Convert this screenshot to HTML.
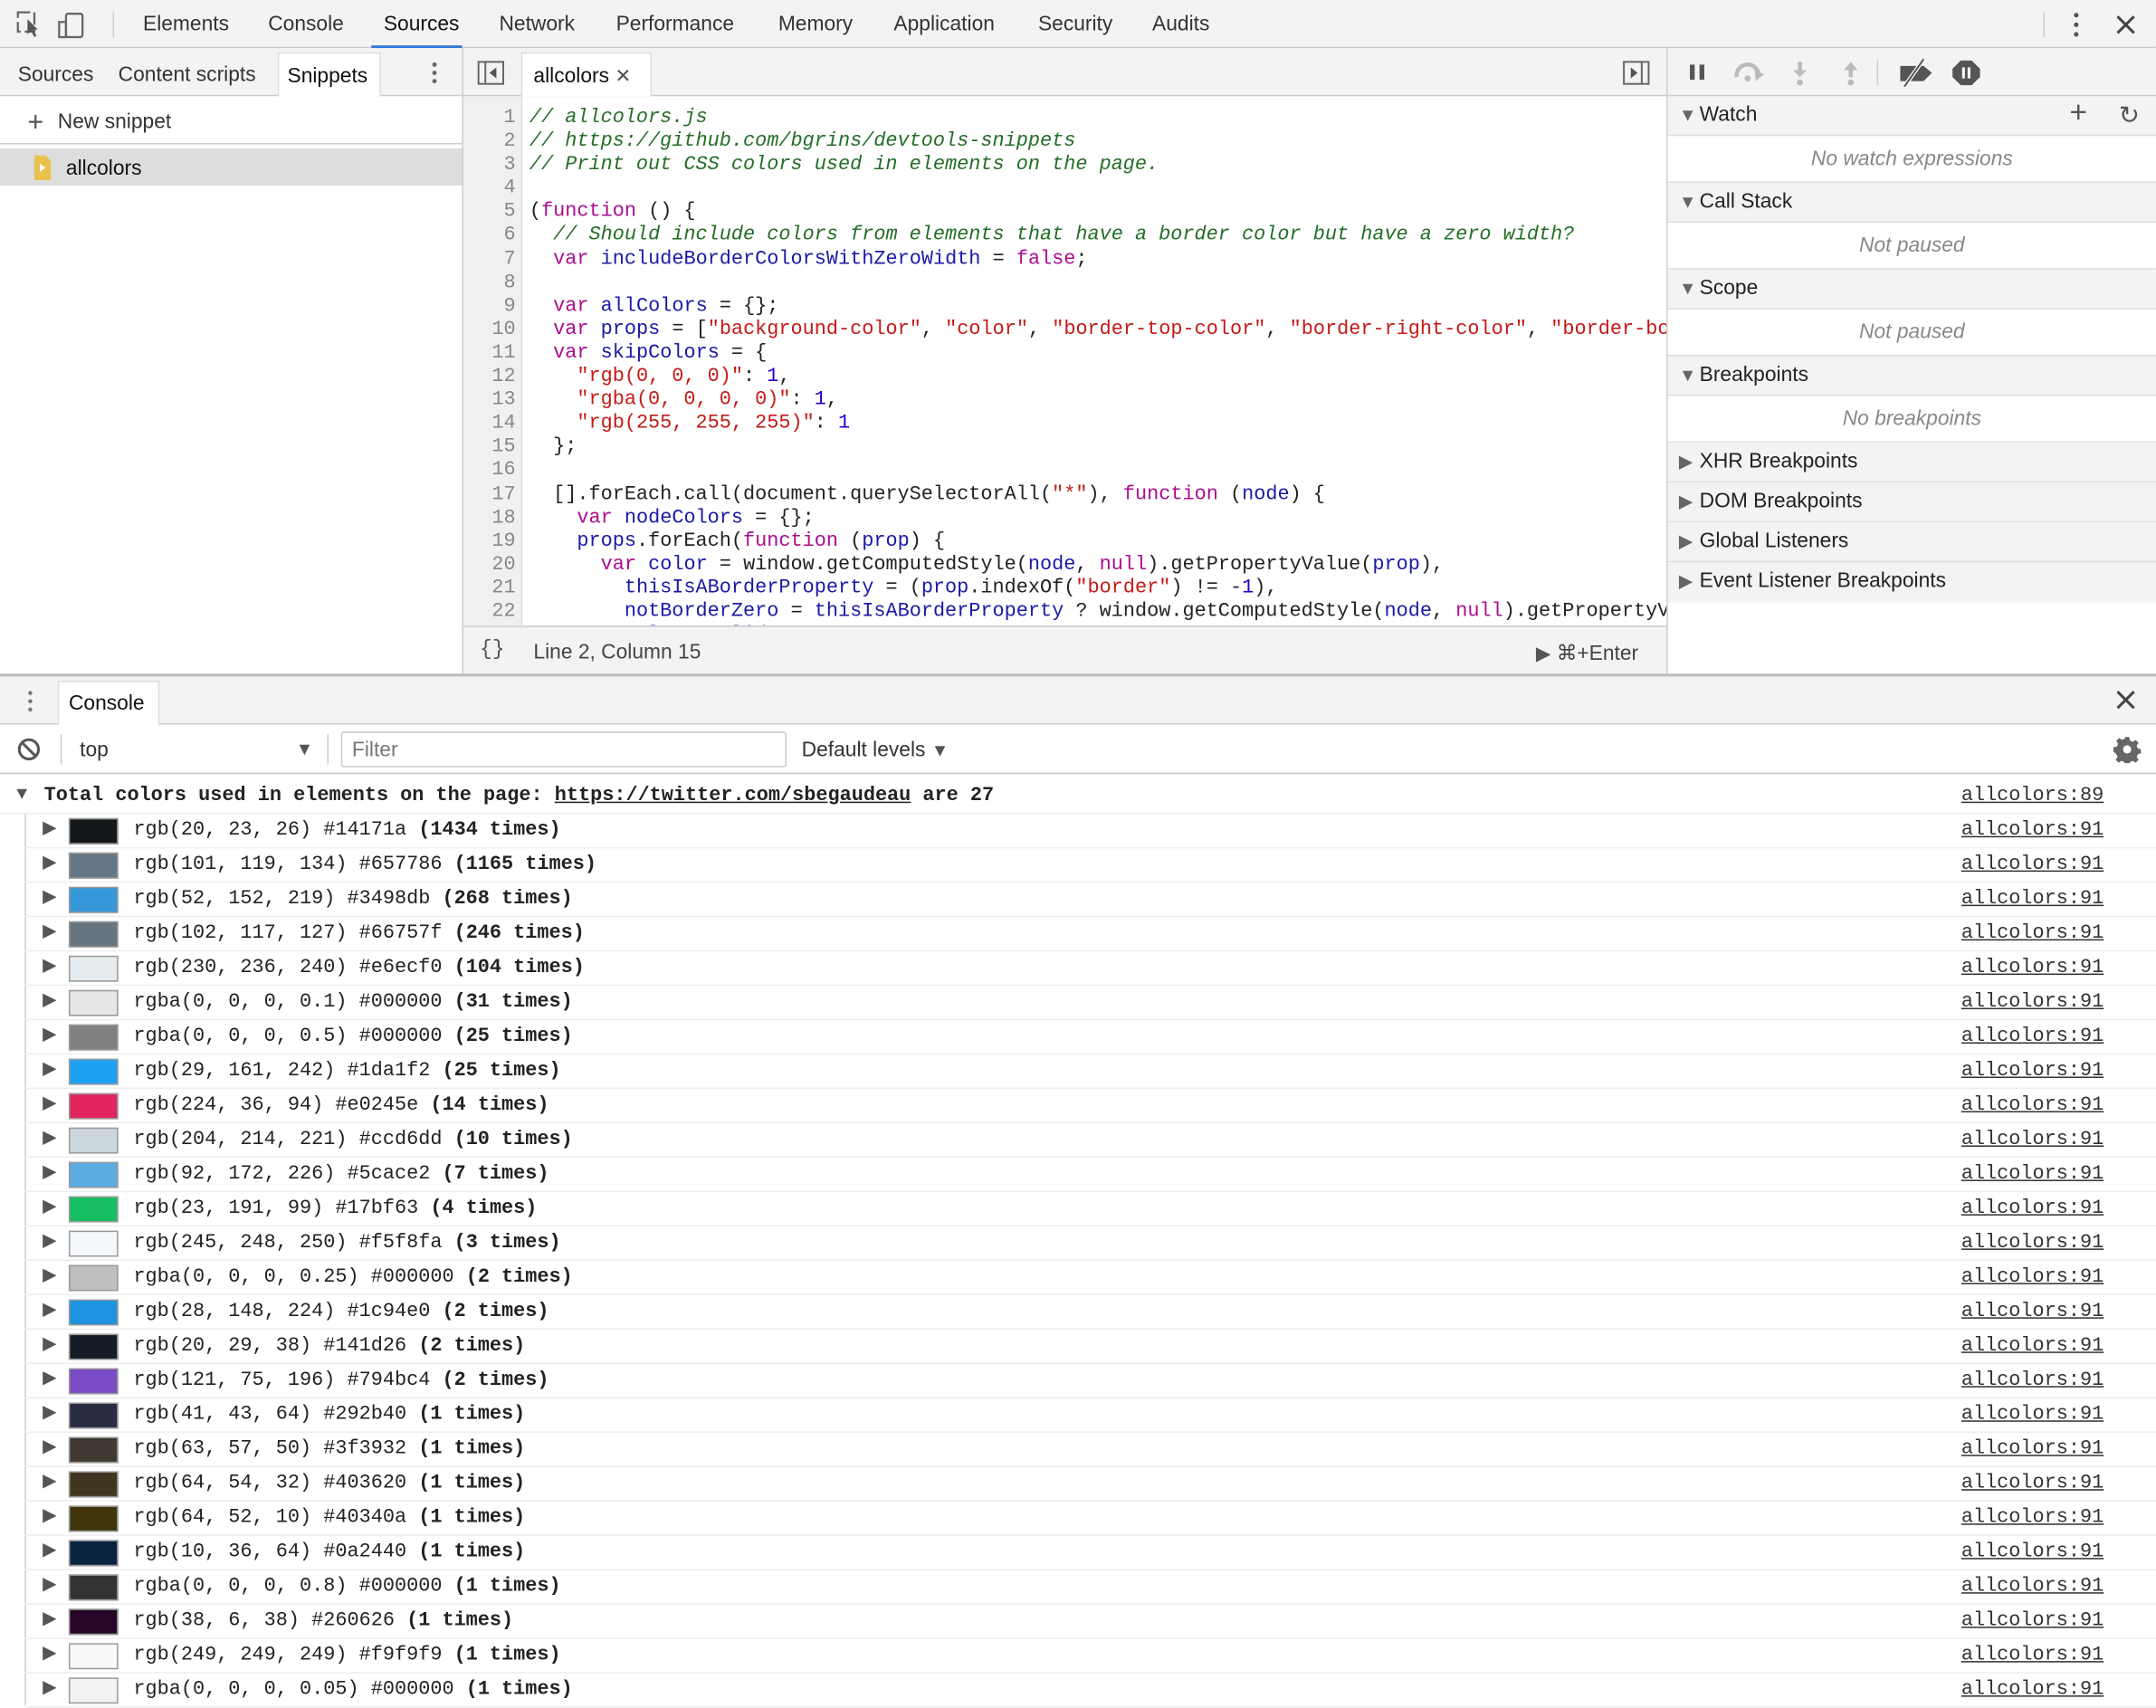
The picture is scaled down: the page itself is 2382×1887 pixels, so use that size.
<!DOCTYPE html>
<html><head><meta charset="utf-8"><style>
*{box-sizing:border-box;margin:0;padding:0}
html,body{width:2382px;height:1884px;overflow:hidden;background:#fff}
#w{position:absolute;left:0;top:0;width:1568px;height:1240px;transform:scale(1.51913);transform-origin:0 0;font-family:"Liberation Sans",sans-serif;font-size:15px;color:#333}
.a{position:absolute}
.bar{background:#f3f3f3}
.mono{font-family:"Liberation Mono",monospace;font-size:14.4px}
.cm{color:#236e25;font-style:italic}
.k{color:#aa0d91}.v{color:#1a1aa6}.s{color:#c41a16}.n{color:#1c00cf}
.code div{height:17.1px;line-height:17.1px;white-space:pre}
.ln div{height:17.1px;line-height:17.1px;text-align:right;color:#888}
.sec{position:absolute;left:1213px;width:355px;background:#f3f3f3;border-bottom:1px solid #ddd;height:29px;line-height:28px;padding-left:23px;font-size:15px;color:#222}
.sec i{position:absolute;left:8px;top:0;font-style:normal;font-size:13px;color:#666}
.emp{position:absolute;left:1213px;width:355px;text-align:center;font-style:italic;color:#888;height:34px;line-height:34px;border-bottom:1px solid #ddd;background:#fff}
.row{position:absolute;left:18px;width:1550px;height:25px;border-bottom:1px solid #eee;font-family:"Liberation Mono",monospace;font-size:14.4px;line-height:25px;color:#222}
.row .t{position:absolute;left:13px;top:-2px;font-size:13px;color:#555}
.row .sw{position:absolute;left:32px;top:3px;width:36px;height:19px;border:1px solid #999}
.row .x{position:absolute;left:79px}
.row .r{position:absolute;right:38px;text-decoration:underline;color:#333}
b{font-weight:bold}
</style></head><body><div id="w">
<div class="a bar" style="left:0;top:0;width:1568px;height:35px;border-bottom:1px solid #ccc"></div>
<svg class="a" style="left:12px;top:8px" width="54" height="20"><rect x="1" y="1" width="12" height="14" fill="none" stroke="#666" stroke-width="1.5" stroke-dasharray="9 3"/><path d="M8 6 L8 17 L10.5 14.5 L13 19 L14.5 18 L12 13.5 L15.5 13.5Z" fill="#555"/><rect x="36" y="2" width="12" height="17" rx="1.5" fill="none" stroke="#666" stroke-width="1.5"/><rect x="31" y="8" width="5" height="11" fill="none" stroke="#666" stroke-width="1.5"/></svg>
<div class="a" style="left:82px;top:9px;width:1px;height:18px;background:#ccc"></div>
<div class="a" style="left:104px;top:9px;color:#333">Elements</div>
<div class="a" style="left:195px;top:9px">Console</div>
<div class="a" style="left:279px;top:9px;color:#111">Sources</div>
<div class="a" style="left:270px;top:33px;width:66px;height:2px;background:#3879d9"></div>
<div class="a" style="left:363px;top:9px">Network</div>
<div class="a" style="left:448px;top:9px">Performance</div>
<div class="a" style="left:566px;top:9px">Memory</div>
<div class="a" style="left:650px;top:9px">Application</div>
<div class="a" style="left:755px;top:9px">Security</div>
<div class="a" style="left:838px;top:9px">Audits</div>
<div class="a" style="left:1486px;top:9px;width:1px;height:18px;background:#ccc"></div>
<svg class="a" style="left:1505px;top:8px" width="10" height="20"><circle cx="5" cy="3" r="1.7" fill="#555"/><circle cx="5" cy="10" r="1.7" fill="#555"/><circle cx="5" cy="17" r="1.7" fill="#555"/></svg>
<svg class="a" style="left:1539px;top:11px" width="14" height="14"><path d="M1 1L13 13M13 1L1 13" stroke="#444" stroke-width="2"/></svg>

<div class="a bar" style="left:0;top:35px;width:336px;height:35px;border-bottom:1px solid #ccc"></div>
<div class="a" style="left:13px;top:46px">Sources</div>
<div class="a" style="left:86px;top:46px">Content scripts</div>
<div class="a" style="left:202px;top:38px;width:75px;height:32px;background:#fff;border:1px solid #ddd;border-bottom:none;padding:8px 0 0 6px;color:#111">Snippets</div>
<svg class="a" style="left:312px;top:44px" width="8" height="18"><circle cx="4" cy="3" r="1.6" fill="#666"/><circle cx="4" cy="9" r="1.6" fill="#666"/><circle cx="4" cy="15" r="1.6" fill="#666"/></svg>
<div class="a" style="left:0;top:70px;width:336px;height:35px;border-bottom:1px solid #ccc;background:#fff"></div>
<div class="a" style="left:20px;top:78px;font-size:20px;color:#555;font-weight:300">+</div>
<div class="a" style="left:42px;top:80px">New snippet</div>
<div class="a" style="left:0;top:108px;width:336px;height:27px;background:#ddd"></div>
<svg class="a" style="left:24px;top:113px" width="14" height="18"><path d="M1 0H9L13 4V18H1Z" fill="#e8c24d"/><path d="M5 6L9 9L5 12Z" fill="#fff"/></svg>
<div class="a" style="left:48px;top:114px;color:#111">allcolors</div>
<div class="a" style="left:336px;top:35px;width:1px;height:456px;background:#ccc"></div>

<div class="a bar" style="left:337px;top:35px;width:876px;height:35px;border-bottom:1px solid #ccc"></div>
<svg class="a" style="left:347px;top:44px" width="20" height="18"><rect x="1" y="1" width="18" height="16" fill="none" stroke="#666" stroke-width="1.3"/><path d="M6 1V17" stroke="#666" stroke-width="1.3"/><path d="M14 5L9 9L14 13Z" fill="#555"/></svg>
<div class="a" style="left:379px;top:38px;width:95px;height:32px;background:#fff;border:1px solid #ddd;border-bottom:none;padding:8px 0 0 8px;color:#111">allcolors <span style="color:#555;font-size:14px">✕</span></div>
<svg class="a" style="left:1180px;top:44px" width="20" height="18"><rect x="1" y="1" width="18" height="16" fill="none" stroke="#666" stroke-width="1.3"/><path d="M14 1V17" stroke="#666" stroke-width="1.3"/><path d="M6 5L11 9L6 13Z" fill="#555"/></svg>
<div class="a" style="left:337px;top:70px;width:43px;height:385px;background:#f0f0f0;border-right:1px solid #ddd"></div>
<div class="a ln mono" style="left:337px;top:78px;width:38px;height:377px;overflow:hidden">
<div>1</div><div>2</div><div>3</div><div>4</div><div>5</div><div>6</div><div>7</div><div>8</div><div>9</div><div>10</div><div>11</div><div>12</div><div>13</div><div>14</div><div>15</div><div>16</div><div>17</div><div>18</div><div>19</div><div>20</div><div>21</div><div>22</div><div>23</div></div>
<div class="a code mono" style="left:385px;top:78px;width:827px;height:377px;overflow:hidden;color:#222">
<div class="cm">// allcolors.js</div>
<div class="cm">// https://github.com/bgrins/devtools-snippets</div>
<div class="cm">// Print out CSS colors used in elements on the page.</div>
<div> </div>
<div>(<span class="k">function</span> () {</div>
<div>  <span class="cm">// Should include colors from elements that have a border color but have a zero width?</span></div>
<div>  <span class="k">var</span> <span class="v">includeBorderColorsWithZeroWidth</span> = <span class="k">false</span>;</div>
<div> </div>
<div>  <span class="k">var</span> <span class="v">allColors</span> = {};</div>
<div>  <span class="k">var</span> <span class="v">props</span> = [<span class="s">"background-color"</span>, <span class="s">"color"</span>, <span class="s">"border-top-color"</span>, <span class="s">"border-right-color"</span>, <span class="s">"border-bottom-color"</span></div>
<div>  <span class="k">var</span> <span class="v">skipColors</span> = {</div>
<div>    <span class="s">"rgb(0, 0, 0)"</span>: <span class="n">1</span>,</div>
<div>    <span class="s">"rgba(0, 0, 0, 0)"</span>: <span class="n">1</span>,</div>
<div>    <span class="s">"rgb(255, 255, 255)"</span>: <span class="n">1</span></div>
<div>  };</div>
<div> </div>
<div>  [].forEach.call(document.querySelectorAll(<span class="s">"*"</span>), <span class="k">function</span> (<span class="v">node</span>) {</div>
<div>    <span class="k">var</span> <span class="v">nodeColors</span> = {};</div>
<div>    <span class="v">props</span>.forEach(<span class="k">function</span> (<span class="v">prop</span>) {</div>
<div>      <span class="k">var</span> <span class="v">color</span> = window.getComputedStyle(<span class="v">node</span>, <span class="k">null</span>).getPropertyValue(<span class="v">prop</span>),</div>
<div>        <span class="v">thisIsABorderProperty</span> = (<span class="v">prop</span>.indexOf(<span class="s">"border"</span>) != -<span class="n">1</span>),</div>
<div>        <span class="v">notBorderZero</span> = <span class="v">thisIsABorderProperty</span> ? window.getComputedStyle(<span class="v">node</span>, <span class="k">null</span>).getPropertyValue</div>
<div>        <span class="v">colorIsValid</span> = </div>
</div>
<div class="a bar" style="left:337px;top:455px;width:876px;height:36px;border-top:1px solid #ccc"></div>
<div class="a" style="left:349px;top:464px;font-family:'Liberation Mono',monospace;color:#555">{}</div>
<div class="a" style="left:388px;top:466px;color:#444">Line 2, Column 15</div>
<div class="a" style="left:1117px;top:466px;color:#444"><span style="font-size:14px;color:#555">▶</span> ⌘+Enter</div>
<div class="a" style="left:1212px;top:35px;width:1px;height:456px;background:#ccc"></div>

<div class="a bar" style="left:1213px;top:35px;width:355px;height:35px;border-bottom:1px solid #ccc"></div>
<svg class="a" style="left:1225px;top:42px" width="230" height="22">
<rect x="4" y="5" width="3.5" height="11" fill="#555"/><rect x="11" y="5" width="3.5" height="11" fill="#555"/>
<path d="M38 14A8 8 0 0 1 54 12" fill="none" stroke="#bbb" stroke-width="3"/><path d="M51 9L58 12L52 17Z" fill="#bbb"/><circle cx="46" cy="15" r="2.2" fill="#bbb"/>
<path d="M84 3V11" stroke="#bbb" stroke-width="3"/><path d="M79 9H89L84 14Z" fill="#bbb"/><circle cx="84" cy="18" r="2.2" fill="#bbb"/>
<path d="M121 8V14" stroke="#bbb" stroke-width="3"/><path d="M116 9H126L121 3Z" fill="#bbb"/><circle cx="121" cy="18" r="2.2" fill="#bbb"/>
<rect x="140" y="2" width="1" height="18" fill="#ccc"/>
<path d="M157 6H174L180 11L174 17H157Z" fill="#555"/><path d="M160 21L174 1" stroke="#f3f3f3" stroke-width="3"/><path d="M160 21L174 1" stroke="#555" stroke-width="1.3"/>
<path d="M201 2H209L215 8V14L209 20H201L195 14V8Z" fill="#555"/><rect x="202" y="7" width="2" height="8" fill="#fff"/><rect x="206" y="7" width="2" height="8" fill="#fff"/>
</svg>
<div class="sec" style="top:70px"><i>▼</i>Watch<span style="position:absolute;right:50px;top:-2px;font-size:22px;color:#555;font-weight:300">+</span><span style="position:absolute;right:12px;top:0;font-size:18px;color:#555">↻</span></div>
<div class="emp" style="top:99px">No watch expressions</div>
<div class="sec" style="top:133px"><i>▼</i>Call Stack</div>
<div class="emp" style="top:162px">Not paused</div>
<div class="sec" style="top:196px"><i>▼</i>Scope</div>
<div class="emp" style="top:225px">Not paused</div>
<div class="sec" style="top:259px"><i>▼</i>Breakpoints</div>
<div class="emp" style="top:288px">No breakpoints</div>
<div class="sec" style="top:322px"><i>▶</i>XHR Breakpoints</div>
<div class="sec" style="top:351px"><i>▶</i>DOM Breakpoints</div>
<div class="sec" style="top:380px"><i>▶</i>Global Listeners</div>
<div class="sec" style="top:409px;border-bottom:none"><i>▶</i>Event Listener Breakpoints</div>

<div class="a" style="left:0;top:490px;width:1568px;height:2px;background:#bbb"></div>
<div class="a bar" style="left:0;top:492px;width:1568px;height:35px;border-bottom:1px solid #ccc"></div>
<svg class="a" style="left:18px;top:501px" width="8" height="18"><circle cx="4" cy="3" r="1.5" fill="#777"/><circle cx="4" cy="9" r="1.5" fill="#777"/><circle cx="4" cy="15" r="1.5" fill="#777"/></svg>
<div class="a" style="left:42px;top:495px;width:74px;height:32px;background:#fff;border:1px solid #ddd;border-bottom:none;padding:7px 0 0 7px;color:#111">Console</div>
<svg class="a" style="left:1539px;top:502px" width="14" height="14"><path d="M1 1L13 13M13 1L1 13" stroke="#444" stroke-width="2"/></svg>
<div class="a" style="left:0;top:527px;width:1568px;height:36px;border-bottom:1px solid #ccc;background:#fff"></div>
<svg class="a" style="left:12px;top:536px" width="18" height="18"><circle cx="9" cy="9" r="7" fill="none" stroke="#555" stroke-width="2"/><path d="M4 4L14 14" stroke="#555" stroke-width="2"/></svg>
<div class="a" style="left:44px;top:534px;width:1px;height:22px;background:#ccc"></div>
<div class="a" style="left:58px;top:537px;color:#333">top</div>
<div class="a" style="left:215px;top:537px;font-size:13px;color:#555">▼</div>
<div class="a" style="left:238px;top:534px;width:1px;height:22px;background:#ccc"></div>
<div class="a" style="left:248px;top:532px;width:324px;height:26px;border:1px solid #ccc;border-radius:2px;padding:4px 0 0 7px;color:#777">Filter</div>
<div class="a" style="left:583px;top:537px;color:#333">Default levels <span style="font-size:13px;color:#555">▼</span></div>
<svg class="a" style="left:1537px;top:535px" width="20" height="20" viewBox="0 0 20 20"><path d="M8.5 1h3l.5 2.5 2 1 2.2-1.4 2.1 2.1-1.4 2.2 1 2 2.5.5v3l-2.5.5-1 2 1.4 2.2-2.1 2.1-2.2-1.4-2 1-.5 2.5h-3l-.5-2.5-2-1-2.2 1.4-2.1-2.1 1.4-2.2-1-2L0 11.5v-3l2.5-.5 1-2L2.1 3.8l2.1-2.1 2.2 1.4 2-1z" fill="#666"/><circle cx="10" cy="10" r="3" fill="#fff"/></svg>

<div class="a" style="left:0;top:567px;width:1568px;height:25px;border-bottom:1px solid #eee;font-family:'Liberation Mono',monospace;font-size:14.4px;line-height:25px;color:#222"><span style="position:absolute;left:12px;top:-2px;font-size:13px;color:#555">▼</span><b style="position:absolute;left:32px;white-space:pre">Total colors used in elements on the page: <u>https://twitter.com/sbegaudeau</u> are 27</b><span style="position:absolute;right:38px;text-decoration:underline;color:#333">allcolors:89</span></div>
<div class="a" style="left:18px;top:592px;width:1px;height:648px;background:#ccc"></div>
<div class="row" style="top:592px"><span class="t">▶</span><span class="sw" style="background:#14171a"></span><span class="x">rgb(20, 23, 26) #14171a <b>(1434 times)</b></span><span class="r">allcolors:91</span></div>
<div class="row" style="top:617px"><span class="t">▶</span><span class="sw" style="background:#657786"></span><span class="x">rgb(101, 119, 134) #657786 <b>(1165 times)</b></span><span class="r">allcolors:91</span></div>
<div class="row" style="top:642px"><span class="t">▶</span><span class="sw" style="background:#3498db"></span><span class="x">rgb(52, 152, 219) #3498db <b>(268 times)</b></span><span class="r">allcolors:91</span></div>
<div class="row" style="top:667px"><span class="t">▶</span><span class="sw" style="background:#66757f"></span><span class="x">rgb(102, 117, 127) #66757f <b>(246 times)</b></span><span class="r">allcolors:91</span></div>
<div class="row" style="top:692px"><span class="t">▶</span><span class="sw" style="background:#e6ecf0"></span><span class="x">rgb(230, 236, 240) #e6ecf0 <b>(104 times)</b></span><span class="r">allcolors:91</span></div>
<div class="row" style="top:717px"><span class="t">▶</span><span class="sw" style="background:#e6e6e6"></span><span class="x">rgba(0, 0, 0, 0.1) #000000 <b>(31 times)</b></span><span class="r">allcolors:91</span></div>
<div class="row" style="top:742px"><span class="t">▶</span><span class="sw" style="background:#808080"></span><span class="x">rgba(0, 0, 0, 0.5) #000000 <b>(25 times)</b></span><span class="r">allcolors:91</span></div>
<div class="row" style="top:767px"><span class="t">▶</span><span class="sw" style="background:#1da1f2"></span><span class="x">rgb(29, 161, 242) #1da1f2 <b>(25 times)</b></span><span class="r">allcolors:91</span></div>
<div class="row" style="top:792px"><span class="t">▶</span><span class="sw" style="background:#e0245e"></span><span class="x">rgb(224, 36, 94) #e0245e <b>(14 times)</b></span><span class="r">allcolors:91</span></div>
<div class="row" style="top:817px"><span class="t">▶</span><span class="sw" style="background:#ccd6dd"></span><span class="x">rgb(204, 214, 221) #ccd6dd <b>(10 times)</b></span><span class="r">allcolors:91</span></div>
<div class="row" style="top:842px"><span class="t">▶</span><span class="sw" style="background:#5cace2"></span><span class="x">rgb(92, 172, 226) #5cace2 <b>(7 times)</b></span><span class="r">allcolors:91</span></div>
<div class="row" style="top:867px"><span class="t">▶</span><span class="sw" style="background:#17bf63"></span><span class="x">rgb(23, 191, 99) #17bf63 <b>(4 times)</b></span><span class="r">allcolors:91</span></div>
<div class="row" style="top:892px"><span class="t">▶</span><span class="sw" style="background:#f5f8fa"></span><span class="x">rgb(245, 248, 250) #f5f8fa <b>(3 times)</b></span><span class="r">allcolors:91</span></div>
<div class="row" style="top:917px"><span class="t">▶</span><span class="sw" style="background:#bfbfbf"></span><span class="x">rgba(0, 0, 0, 0.25) #000000 <b>(2 times)</b></span><span class="r">allcolors:91</span></div>
<div class="row" style="top:942px"><span class="t">▶</span><span class="sw" style="background:#1c94e0"></span><span class="x">rgb(28, 148, 224) #1c94e0 <b>(2 times)</b></span><span class="r">allcolors:91</span></div>
<div class="row" style="top:967px"><span class="t">▶</span><span class="sw" style="background:#141d26"></span><span class="x">rgb(20, 29, 38) #141d26 <b>(2 times)</b></span><span class="r">allcolors:91</span></div>
<div class="row" style="top:992px"><span class="t">▶</span><span class="sw" style="background:#794bc4"></span><span class="x">rgb(121, 75, 196) #794bc4 <b>(2 times)</b></span><span class="r">allcolors:91</span></div>
<div class="row" style="top:1017px"><span class="t">▶</span><span class="sw" style="background:#292b40"></span><span class="x">rgb(41, 43, 64) #292b40 <b>(1 times)</b></span><span class="r">allcolors:91</span></div>
<div class="row" style="top:1042px"><span class="t">▶</span><span class="sw" style="background:#3f3932"></span><span class="x">rgb(63, 57, 50) #3f3932 <b>(1 times)</b></span><span class="r">allcolors:91</span></div>
<div class="row" style="top:1067px"><span class="t">▶</span><span class="sw" style="background:#403620"></span><span class="x">rgb(64, 54, 32) #403620 <b>(1 times)</b></span><span class="r">allcolors:91</span></div>
<div class="row" style="top:1092px"><span class="t">▶</span><span class="sw" style="background:#40340a"></span><span class="x">rgb(64, 52, 10) #40340a <b>(1 times)</b></span><span class="r">allcolors:91</span></div>
<div class="row" style="top:1117px"><span class="t">▶</span><span class="sw" style="background:#0a2440"></span><span class="x">rgb(10, 36, 64) #0a2440 <b>(1 times)</b></span><span class="r">allcolors:91</span></div>
<div class="row" style="top:1142px"><span class="t">▶</span><span class="sw" style="background:#333333"></span><span class="x">rgba(0, 0, 0, 0.8) #000000 <b>(1 times)</b></span><span class="r">allcolors:91</span></div>
<div class="row" style="top:1167px"><span class="t">▶</span><span class="sw" style="background:#260626"></span><span class="x">rgb(38, 6, 38) #260626 <b>(1 times)</b></span><span class="r">allcolors:91</span></div>
<div class="row" style="top:1192px"><span class="t">▶</span><span class="sw" style="background:#f9f9f9"></span><span class="x">rgb(249, 249, 249) #f9f9f9 <b>(1 times)</b></span><span class="r">allcolors:91</span></div>
<div class="row" style="top:1217px"><span class="t">▶</span><span class="sw" style="background:#f2f2f2"></span><span class="x">rgba(0, 0, 0, 0.05) #000000 <b>(1 times)</b></span><span class="r">allcolors:91</span></div>
</div></body></html>
